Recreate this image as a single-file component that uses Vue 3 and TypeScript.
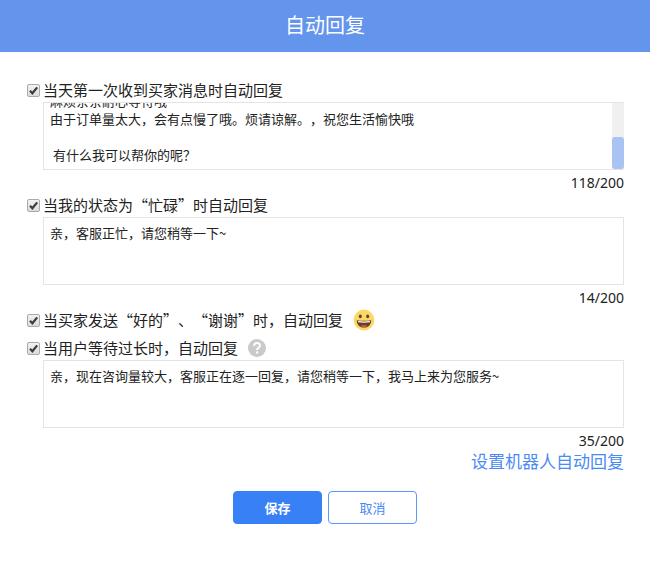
<script setup lang="ts">
import { nextTick, onMounted, reactive, ref } from 'vue'

interface ReplyRule {
  id: string
  label: string
  enabled: boolean
  text?: string
  icon?: 'smile' | 'help'
}

interface Thumb {
  top: number
  height: number
}

const maxLength = 200

const rules = reactive<ReplyRule[]>([
  {
    id: 'first-message',
    label: '当天第一次收到买家消息时自动回复',
    enabled: true,
    text: [
      '亲，您好，欢迎光临本店，很高兴为您服务。',
      '请问您有什么问题需要咨询的呢？',
      '现在咨询的人数比较多，客服会按照先后顺序逐一为您回复哦，',
      '麻烦亲亲耐心等待哦',
      '由于订单量太大，会有点慢了哦。烦请谅解。，祝您生活愉快哦',
      '',
      ' 有什么我可以帮你的呢？',
    ].join('\n'),
  },
  {
    id: 'busy',
    label: '当我的状态为“忙碌”时自动回复',
    enabled: true,
    text: '亲，客服正忙，请您稍等一下~',
  },
  {
    id: 'thanks',
    label: '当买家发送“好的”、“谢谢”时，自动回复',
    enabled: true,
    icon: 'smile',
  },
  {
    id: 'waiting',
    label: '当用户等待过长时，自动回复',
    enabled: true,
    icon: 'help',
    text: '亲，现在咨询量较大，客服正在逐一回复，请您稍等一下，我马上来为您服务~',
  },
])

const form = ref<HTMLFormElement | null>(null)
const thumbs = reactive<Record<string, Thumb | undefined>>({})

// Thumb place and size, in percent of the track; none when everything fits.
function updateThumb(area: HTMLTextAreaElement) {
  const { scrollTop, scrollHeight, clientHeight } = area
  thumbs[area.name] =
    scrollHeight > clientHeight
      ? { top: (scrollTop / scrollHeight) * 100, height: (clientHeight / scrollHeight) * 100 }
      : undefined
}

function onAreaChange(event: Event) {
  updateThumb(event.target as HTMLTextAreaElement)
}

// Long replies open at their last line.
onMounted(async () => {
  await nextTick()
  form.value?.querySelectorAll('textarea').forEach((area) => {
    area.scrollTop = area.scrollHeight
    updateThumb(area)
  })
})
</script>

<template>
  <div class="dialog">
    <header class="header">
      <h1 class="title">自动回复</h1>
    </header>
    <form ref="form" class="body" @submit.prevent>
      <section v-for="rule in rules" :key="rule.id" class="rule">
        <div class="rule-head">
          <label class="check">
            <span class="box">
              <input v-model="rule.enabled" class="box-input" type="checkbox" />
              <svg v-if="rule.enabled" class="box-mark" viewBox="0 0 13 13" aria-hidden="true">
                <path d="M3 6.8 5.4 9.3 10.2 3.4" fill="none" stroke="#3c3c3c" stroke-width="2.2" />
              </svg>
            </span>
            <span>{{ rule.label }}</span>
          </label>
          <svg v-if="rule.icon === 'smile'" class="smile" viewBox="0 0 22 22" aria-hidden="true">
            <circle cx="11" cy="11" r="10.4" fill="#fbd866" />
            <ellipse cx="7.3" cy="7.4" rx="1.5" ry="1.8" fill="#5f4024" />
            <ellipse cx="14.7" cy="7.4" rx="1.5" ry="1.8" fill="#5f4024" />
            <path d="M3.8 11.2Q11 12.2 18.2 11.2C18.2 15.8 15.2 18.6 11 18.6S3.8 15.8 3.8 11.2Z" fill="#664023" />
            <path d="M5 12Q11 12.8 17 12L16.8 13.3Q11 14 5.2 13.3Z" fill="#fff" />
            <path d="M7.2 17.2Q11 14.6 14.8 17.2Q11 19.2 7.2 17.2Z" fill="#c9574a" />
          </svg>
          <svg v-if="rule.icon === 'help'" class="help" viewBox="0 0 18 18" aria-hidden="true">
            <circle cx="9" cy="9" r="9" fill="#cacaca" />
            <path d="M6 7C6 5 7.2 4 9 4S12 5.1 12 6.7C12 8.6 9.1 8.7 9.1 11" fill="none" stroke="#fff" stroke-width="1.9" />
            <circle cx="9.1" cy="13.4" r="1.2" fill="#fff" />
          </svg>
        </div>
        <div v-if="rule.text !== undefined" class="reply">
          <div class="field">
            <textarea
              v-model="rule.text"
              class="area"
              :name="rule.id"
              :maxlength="maxLength"
              :aria-label="rule.label"
              spellcheck="false"
              @scroll="onAreaChange"
              @input="onAreaChange"
            ></textarea>
            <div v-if="thumbs[rule.id]" class="track" aria-hidden="true">
              <div
                class="thumb"
                :style="{ top: `${thumbs[rule.id]?.top}%`, height: `${thumbs[rule.id]?.height}%` }"
              ></div>
            </div>
          </div>
          <span class="count">{{ rule.text.length }}/{{ maxLength }}</span>
        </div>
      </section>
      <a class="robot" href="#robot">设置机器人自动回复</a>
      <div class="actions">
        <button class="btn primary" type="submit">保存</button>
        <button class="btn" type="button">取消</button>
      </div>
    </form>
  </div>
</template>

<style>
body {
  background: #fff;
}
</style>

<style scoped>
.dialog {
  font-family: "Noto Sans", "Noto Sans CJK SC", sans-serif;
  text-spacing-trim: space-all;
  color: #222;
}
.header {
  display: flex;
  align-items: center;
  justify-content: center;
  height: 52px;
  background: #6495ed;
}
.title {
  margin: 0;
  padding-bottom: 2px;
  font-family: "Noto Sans CJK SC", sans-serif;
  font-size: 20px;
  font-weight: 400;
  line-height: 28px;
  color: #fff;
}
.body {
  display: flex;
  flex-direction: column;
  padding: 26px 26px 40px;
}
.rule-head {
  display: flex;
  align-items: center;
  gap: 10px;
  height: 24px;
}
.rule:nth-child(4) {
  margin-top: 4px;
}
.check {
  display: flex;
  align-items: center;
  gap: 3px;
  font-family: "Noto Sans CJK SC", sans-serif;
  font-size: 15px;
  line-height: 24px;
}
.box {
  display: grid;
  padding-left: 1px;
}
.box-input,
.box-mark {
  grid-area: 1 / 1;
  width: 13px;
  height: 13px;
}
.box-input {
  appearance: none;
  box-sizing: border-box;
  margin: 0;
  border: 1px solid #aaa;
  border-radius: 2px;
  background: linear-gradient(#f2f2f2, #dcdcdc);
}
.box-mark {
  pointer-events: none;
}
.smile {
  width: 22px;
  height: 22px;
}
.help {
  width: 18px;
  height: 18px;
}
.reply {
  display: flex;
  flex-direction: column;
  padding-left: 17px;
}
.field {
  display: grid;
}
.area,
.track {
  grid-area: 1 / 1;
}
.area {
  display: block;
  box-sizing: border-box;
  width: 100%;
  height: 68px;
  margin: 0;
  padding: 6px 18px 5px 6px;
  border: 1px solid #e4e4e4;
  border-radius: 0;
  outline: none;
  resize: none;
  overflow-y: auto;
  scrollbar-width: none;
  background: #fff;
  font-family: "Noto Sans CJK SC", sans-serif;
  font-size: 13px;
  line-height: 18px;
  text-spacing-trim: space-all;
  color: #222;
}
.track {
  position: relative;
  justify-self: end;
  width: 12px;
  margin: 1px 0;
  background: #f0f0f0;
  pointer-events: none;
}
.thumb {
  position: absolute;
  left: 0;
  right: 0;
  border-radius: 3px;
  background: #a9c3f3;
}
.count {
  align-self: flex-end;
  padding-top: 3px;
  font-size: 14px;
  line-height: 20px;
}
.robot {
  align-self: flex-end;
  font-family: "Noto Sans CJK SC", sans-serif;
  font-size: 17px;
  line-height: 20px;
  color: #4a8af4;
  text-decoration: none;
}
.actions {
  display: flex;
  justify-content: center;
  gap: 6px;
  margin-top: 20px;
}
.btn {
  box-sizing: border-box;
  width: 89px;
  height: 33px;
  padding: 0;
  border: 1px solid #5b96f7;
  border-radius: 4px;
  background: #fff;
  font-family: "Noto Sans CJK SC", sans-serif;
  font-size: 13px;
  color: #4a87f5;
}
.primary {
  border-color: #3880f6;
  background: #3880f6;
  font-weight: 700;
  color: #fff;
}
</style>
